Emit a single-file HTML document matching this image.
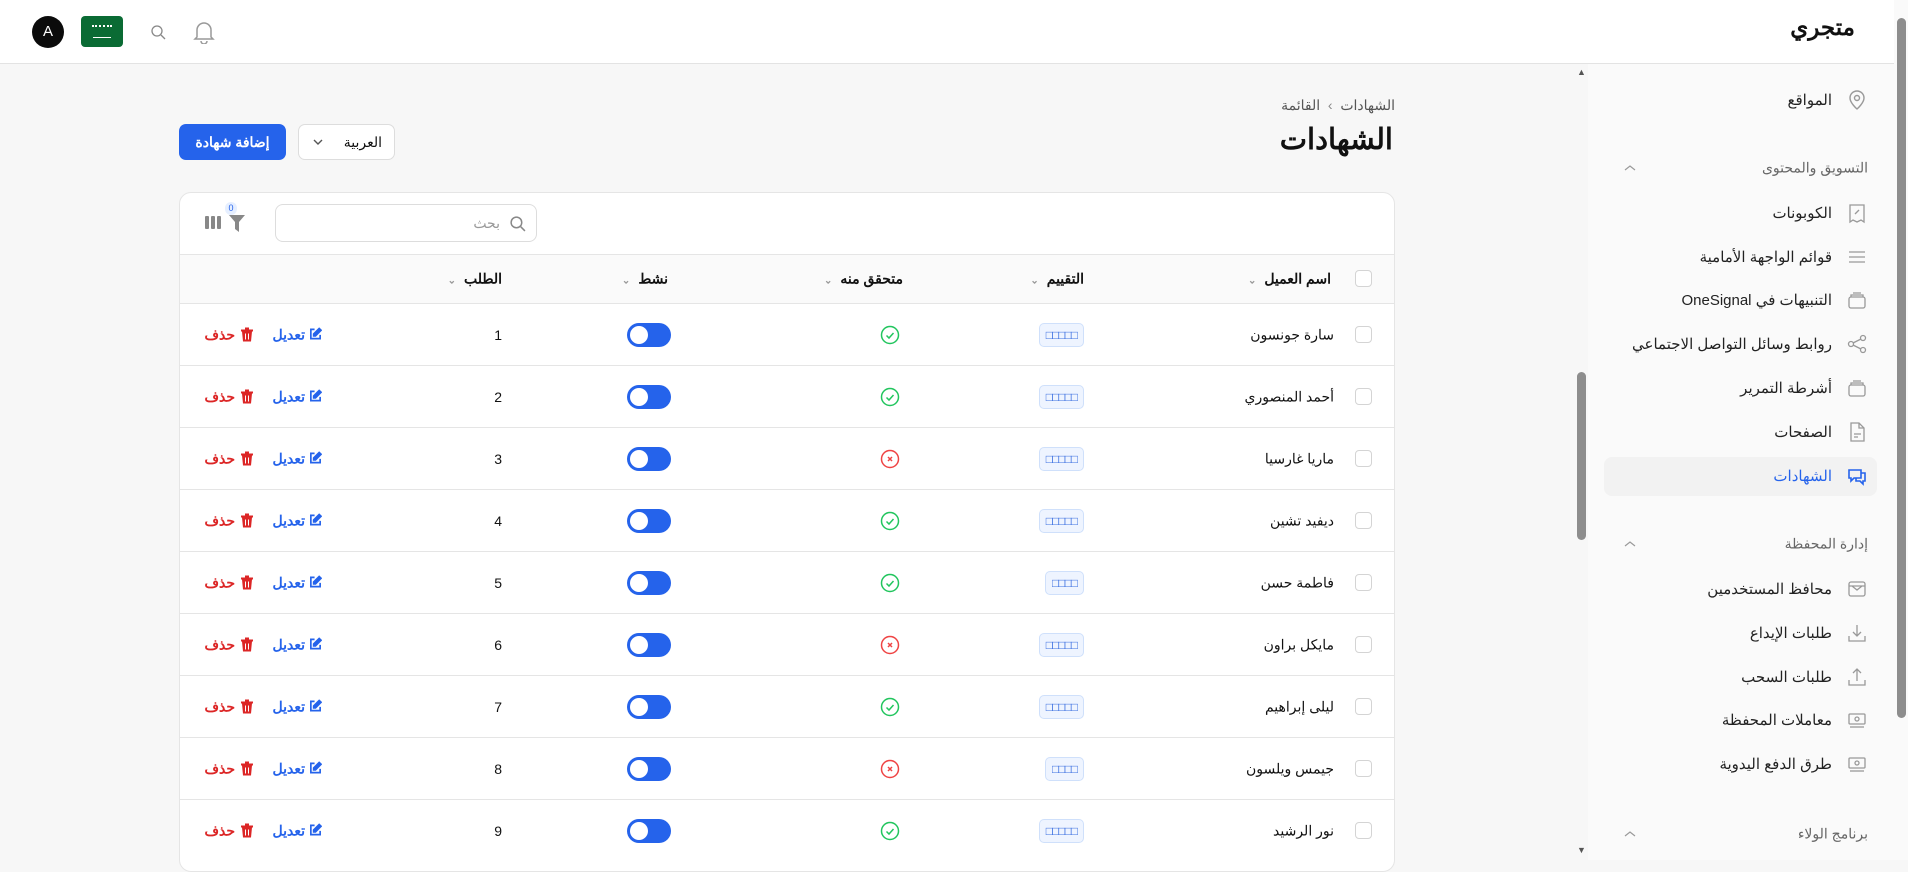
<!DOCTYPE html>
<html lang="ar" dir="rtl"><head><meta charset="utf-8">
<style>
*{box-sizing:border-box;margin:0;padding:0}
body{width:1908px;height:860px;overflow:hidden;background:#f7f7f7;font-family:"Liberation Sans","Noto Sans CJK SC",sans-serif;color:#111;position:relative}
.a{position:absolute}
.hdr{left:0;top:0;width:1894px;height:64px;background:#fff;border-bottom:1px solid #e3e3e3}
.side{left:1588px;top:64px;width:307px;height:796px;background:#fafafa}
.it{position:absolute;right:63px;font-size:15px;color:#222;white-space:nowrap;transform:translateY(-50%)}
.ic{position:absolute;left:258px;width:22px;height:22px;transform:translateY(-50%)}
.sec{position:absolute;right:27px;font-size:14px;color:#666;transform:translateY(-50%)}
.chev{position:absolute;left:36px;transform:translateY(-50%)}
.card{left:179px;top:192px;width:1216px;height:680px;background:#fff;border:1px solid #e5e5e5;border-radius:12px;overflow:hidden}
.row{position:absolute;left:0;width:1216px;height:62px;border-top:1px solid #e5e5e5}
.cb{position:absolute;left:1175px;top:50%;margin-top:-9px;width:17px;height:17px;border:1px solid #d4d4d4;border-radius:4px;background:#fff}
.c{position:absolute;top:50%;transform:translateY(-50%);font-size:14px;white-space:nowrap}
.badge{border:1px solid #cfe0fb;background:#eef4ff;border-radius:5px;height:24px;padding:0 6px;color:#3b6fe0;font-size:12px;letter-spacing:-1px;line-height:22px}
.tg{width:44px;height:24px;border-radius:12px;background:#2563eb}
.tg:after{content:"";position:absolute;left:3px;top:3px;width:18px;height:18px;border-radius:50%;background:#fff}
.th{font-weight:bold;font-size:14px}
.ar{color:#999;font-size:10px;margin-right:8px}
</style></head><body>
<div class="a hdr">
 <div class="a" style="right:39px;top:14px;font-size:23px;font-weight:bold">متجري</div>
 <div class="a" style="left:32px;top:16px;width:32px;height:32px;border-radius:50%;background:#0b0b0b;color:#fff;font-size:15px;text-align:center;line-height:32px;font-family:'Liberation Sans'" dir="ltr">A</div>
 <div class="a" style="left:81px;top:16px;width:42px;height:31px;border-radius:4px;background:#0a6b34">
  <div class="a" style="left:11px;top:9px;width:20px;height:5px;border-top:2px dotted #fff"></div>
  <div class="a" style="left:12px;top:21px;width:18px;height:1px;background:#fff"></div></div>
 <svg class="a" style="left:150px;top:24px" width="16" height="16" viewBox="0 0 16 16" fill="none" stroke="#888" stroke-width="1.3"><circle cx="7" cy="7" r="5"/><path d="M11 11l4 4"/></svg>
 <svg class="a" style="left:193px;top:20px" width="22" height="24" viewBox="0 0 22 24" fill="none" stroke="#999" stroke-width="1.5"><path d="M4 17V10a7 7 0 0114 0v7l2 2H2z"/><path d="M8 21a3 3 0 006 0"/></svg>
</div>
<div class="a" style="left:1576px;top:64px;width:12px;height:796px;background:#f7f7f7"></div>
<div class="a" style="left:1577px;top:372px;width:9px;height:168px;border-radius:5px;background:#8d8d8d"></div>
<div class="a" style="left:1577px;top:67px;font-size:9px;color:#555">▲</div>
<div class="a" style="left:1577px;top:845px;font-size:9px;color:#555">▼</div>
<div class="a" style="left:1894px;top:0;width:14px;height:860px;background:#fafafa"></div>
<div class="a" style="left:1897px;top:18px;width:9px;height:700px;border-radius:5px;background:#8d8d8d"></div>

<div class="a side">
 <div class="it" style="top:36px">المواقع</div>
 <svg class="ic" style="top:36px" viewBox="0 0 22 22" fill="none" stroke="#999" stroke-width="1.4"><path d="M11 20s-7-6-7-11a7 7 0 0114 0c0 5-7 11-7 11z"/><circle cx="11" cy="9" r="2.5"/></svg>
 <div class="sec" style="top:104px">التسويق والمحتوى</div><svg class="chev" style="top:104px" width="12" height="8" viewBox="0 0 12 8" fill="none" stroke="#999" stroke-width="1.2"><path d="M1 6l5-4 5 4"/></svg>
 <div class="it" style="top:149px">الكوبونات</div>
 <svg class="ic" style="top:149px" viewBox="0 0 22 22" fill="none" stroke="#999" stroke-width="1.3"><path d="M4 3h14v17l-3-2-4 2-4-2-3 2z"/><path d="M9 12l4-4"/></svg>
 <div class="it" style="top:193px">قوائم الواجهة الأمامية</div>
 <svg class="ic" style="top:193px" viewBox="0 0 22 22" fill="none" stroke="#999" stroke-width="1.3"><path d="M3 6h16M3 11h16M3 16h16"/></svg>
 <div class="it" style="top:236px">التنبيهات في OneSignal</div>
 <svg class="ic" style="top:236px" viewBox="0 0 22 22" fill="none" stroke="#999" stroke-width="1.3"><rect x="3" y="8" width="16" height="11" rx="2"/><path d="M5 8V6h12v2M7 4h8"/></svg>
 <div class="it" style="top:280px">روابط وسائل التواصل الاجتماعي</div>
 <svg class="ic" style="top:280px" viewBox="0 0 22 22" fill="none" stroke="#999" stroke-width="1.3"><circle cx="17" cy="5" r="2.5"/><circle cx="5" cy="11" r="2.5"/><circle cx="17" cy="17" r="2.5"/><path d="M7 10l8-4M7 12l8 4"/></svg>
 <div class="it" style="top:324px">أشرطة التمرير</div>
 <svg class="ic" style="top:324px" viewBox="0 0 22 22" fill="none" stroke="#999" stroke-width="1.3"><rect x="3" y="8" width="16" height="11" rx="2"/><path d="M5 8V6h12v2M7 4h8"/></svg>
 <div class="it" style="top:368px">الصفحات</div>
 <svg class="ic" style="top:368px" viewBox="0 0 22 22" fill="none" stroke="#999" stroke-width="1.3"><path d="M5 2h8l5 5v13H5z"/><path d="M13 2v5h5M8 13h7M8 16h4"/></svg>
 <div class="a" style="left:16px;top:393px;width:273px;height:39px;border-radius:8px;background:#f2f2f2"></div>
 <div class="it" style="top:412px;color:#2563eb">الشهادات</div>
 <svg class="ic" style="top:412px" viewBox="0 0 22 22" fill="none" stroke="#2563eb" stroke-width="1.6"><path d="M3 5h12v8H8l-3 3v-3H3z"/><path d="M15 8h4v8h-2v3l-3-3h-4v-3"/></svg>
 <div class="sec" style="top:480px">إدارة المحفظة</div><svg class="chev" style="top:480px" width="12" height="8" viewBox="0 0 12 8" fill="none" stroke="#999" stroke-width="1.2"><path d="M1 6l5-4 5 4"/></svg>
 <div class="it" style="top:525px">محافظ المستخدمين</div>
 <svg class="ic" style="top:525px" viewBox="0 0 22 22" fill="none" stroke="#999" stroke-width="1.3"><rect x="3" y="4" width="16" height="14" rx="2"/><path d="M3 8h16M6 8l5 4 5-4"/></svg>
 <div class="it" style="top:569px">طلبات الإيداع</div>
 <svg class="ic" style="top:569px" viewBox="0 0 22 22" fill="none" stroke="#999" stroke-width="1.3"><path d="M11 3v11M7 10l4 4 4-4M3 14v5h16v-5"/></svg>
 <div class="it" style="top:613px">طلبات السحب</div>
 <svg class="ic" style="top:613px" viewBox="0 0 22 22" fill="none" stroke="#999" stroke-width="1.3"><path d="M11 15V3M7 7l4-4 4 4M3 14v5h16v-5"/></svg>
 <div class="it" style="top:656px">معاملات المحفظة</div>
 <svg class="ic" style="top:656px" viewBox="0 0 22 22" fill="none" stroke="#999" stroke-width="1.3"><rect x="3" y="5" width="16" height="10" rx="1"/><circle cx="11" cy="10" r="2"/><path d="M4 18h14"/></svg>
 <div class="it" style="top:700px">طرق الدفع اليدوية</div>
 <svg class="ic" style="top:700px" viewBox="0 0 22 22" fill="none" stroke="#999" stroke-width="1.3"><rect x="3" y="5" width="16" height="10" rx="1"/><circle cx="11" cy="10" r="2"/><path d="M4 18h14"/></svg>
 <div class="sec" style="top:770px">برنامج الولاء</div><svg class="chev" style="top:770px" width="12" height="8" viewBox="0 0 12 8" fill="none" stroke="#999" stroke-width="1.2"><path d="M1 6l5-4 5 4"/></svg>
</div>

<div class="a" style="right:513px;top:97px;font-size:14px;color:#555">الشهادات &nbsp;<span style="color:#888">›</span>&nbsp; القائمة</div>
<div class="a" style="right:515px;top:122px;font-size:29px;font-weight:bold">الشهادات</div>
<div class="a" style="left:298px;top:124px;width:97px;height:36px;border:1px solid #ddd;border-radius:7px;background:#fff">
 <span class="a" style="right:12px;top:9px;font-size:14px">العربية</span>
 <svg class="a" style="left:14px;top:14px" width="10" height="7" viewBox="0 0 10 7" fill="none" stroke="#555" stroke-width="1.4"><path d="M1 1l4 4 4-4"/></svg></div>
<div class="a" style="left:179px;top:124px;width:107px;height:36px;border-radius:7px;background:#2563eb;color:#fff;font-size:14px;font-weight:bold;text-align:center;line-height:36px">إضافة شهادة</div>

<div class="a card">
 <div class="a" style="left:95px;top:11px;width:262px;height:38px;border:1px solid #ddd;border-radius:8px">
  <svg class="a" style="right:10px;top:10px" width="17" height="17" viewBox="0 0 16 16" fill="none" stroke="#888" stroke-width="1.4"><circle cx="7" cy="7" r="5"/><path d="M11 11l4 4"/></svg>
  <span class="a" style="right:36px;top:10px;font-size:14px;color:#999">بحث</span></div>
 <svg class="a" style="left:25px;top:22px" width="17" height="16" viewBox="0 0 17 16" fill="#888"><rect x="0" y="1" width="4" height="13" rx="1"/><rect x="6" y="1" width="4" height="13" rx="1"/><rect x="12" y="1" width="4" height="13" rx="1"/></svg>
 <svg class="a" style="left:49px;top:22px" width="16" height="17" viewBox="0 0 16 17" fill="#888"><path d="M0 0h16l-6 7v10l-4-3V7z"/></svg>
 <div class="a" style="left:45px;top:9px;width:12px;height:13px;border-radius:6px;background:#e6efff;color:#2563eb;font-size:9px;text-align:center;line-height:13px">0</div>
 <div class="a" style="left:0;top:61px;width:1216px;height:49px;background:#fafafa;border-top:1px solid #e5e5e5">
  <div class="cb"></div>
  <div class="c th" style="right:65px">اسم العميل<span class="ar">⌄</span></div>
  <div class="c th" style="right:312px">التقييم<span class="ar">⌄</span></div>
  <div class="c th" style="right:493px">متحقق منه<span class="ar">⌄</span></div>
  <div class="c th" style="right:728px">نشط<span class="ar">⌄</span></div>
  <div class="c th" style="right:894px">الطلب<span class="ar">⌄</span></div>
 </div>
 <div id="rows"></div>
</div>
<script>
var d=[["سارة جونسون",5,1],["أحمد المنصوري",5,1],["ماريا غارسيا",5,0],["ديفيد تشين",5,1],["فاطمة حسن",4,1],["مايكل براون",5,0],["ليلى إبراهيم",5,1],["جيمس ويلسون",4,0],["نور الرشيد",5,1]];
var h="";
d.forEach(function(r,i){
var ok=r[2]?'<svg width="20" height="20" viewBox="0 0 20 20" fill="none" stroke="#22c55e" stroke-width="1.5"><circle cx="10" cy="10" r="8.5"/><path d="M6.5 10.5l2.5 2.5 4.5-5"/></svg>':'<svg width="20" height="20" viewBox="0 0 20 20" fill="none" stroke="#ef4444" stroke-width="1.5"><circle cx="10" cy="10" r="8.5"/><path d="M8 8l4 4M12 8l-4 4"/></svg>';
h+='<div class="row" style="top:'+(110+i*62)+'px"><div class="cb"></div>'+
'<div class="c" style="right:62px">'+r[0]+'</div>'+
'<div class="c badge" style="right:312px">'+"□".repeat(r[1])+'</div>'+
'<div class="c" style="left:700px;height:20px">'+ok+'</div>'+
'<div class="c tg" style="left:447px"></div>'+
'<div class="c" style="right:894px">'+(i+1)+'</div>'+
'<div class="c" style="right:1074px;color:#2563eb;font-weight:bold"><svg width="13" height="13" viewBox="0 0 14 14" fill="none" stroke="#2563eb" stroke-width="1.8" style="vertical-align:-1px;margin-left:4px"><path d="M6 2H2v10h10V8"/><path d="M11 1l2 2-6 6H5V7z" fill="#2563eb"/></svg>تعديل</div>'+
'<div class="c" style="right:1143px;color:#dc2626;font-weight:bold"><svg width="12" height="14" viewBox="0 0 12 14" fill="#dc2626" style="vertical-align:-2px;margin-left:6px"><path d="M0 2h12v2H0zM4 0h4v2H4zM1 4h10l-1 10H2zM4 6v6h1V6zm3 0v6h1V6z" fill-rule="evenodd"/></svg>حذف</div>'+
'</div>';});
document.getElementById("rows").innerHTML=h;
</script>
</body></html>
